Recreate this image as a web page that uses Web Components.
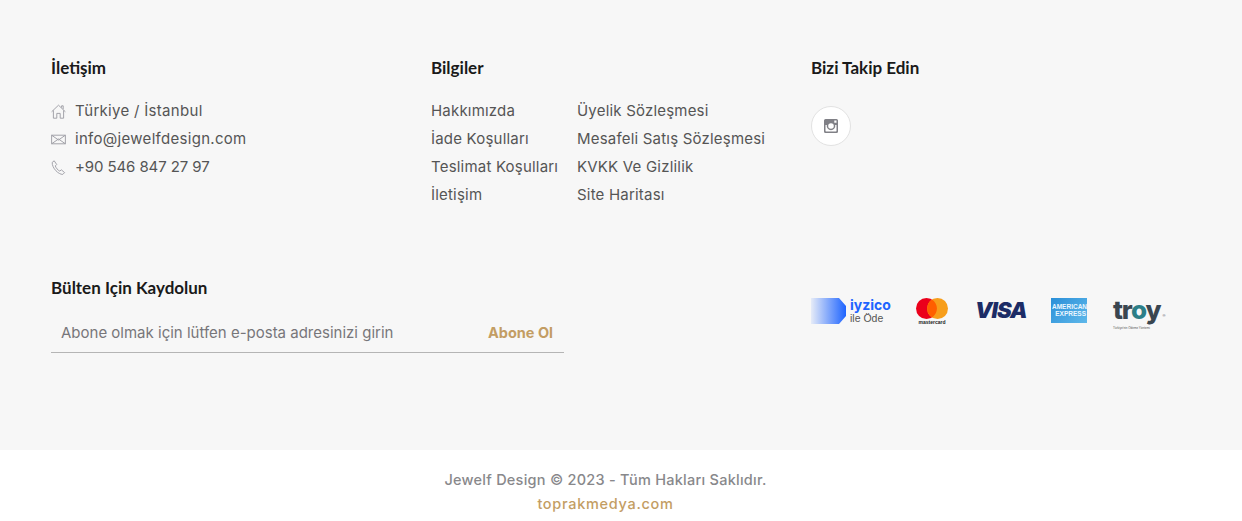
<!DOCTYPE html>
<html lang="tr">
<head>
<meta charset="utf-8">
<title>Jewelf Design</title>
<style>
    html, body { margin: 0; background: #fff; }
</style>
</head>
<body>
<site-footer>
    <footer-column slot="contact" title="İletişim">
        <contact-list></contact-list>
    </footer-column>
    <footer-column slot="info" title="Bilgiler">
        <link-list></link-list>
    </footer-column>
    <footer-column slot="social" title="Bizi Takip Edin">
        <social-button></social-button>
    </footer-column>
    <footer-column slot="news" title="Bülten Için Kaydolun">
        <news-form></news-form>
    </footer-column>
    <pay-logos slot="pay"></pay-logos>
</site-footer>
<copy-bar></copy-bar>

<script>
// Componentes del pie de página

const bodyFont = `"Inter", "Noto Sans", sans-serif`;
const headFont = `"Lato", "Inter", sans-serif`;

class SiteFooter extends HTMLElement {
    constructor() {
        super();
        this.shadow = this.attachShadow({mode: 'open'});
    }

    connectedCallback() {
        this.shadow.innerHTML = `
        <style>
            :host {
                display: block;
                background-color: #f7f7f7;
                height: 450px;
                box-sizing: border-box;
                padding: 58px 51px 0;
            }
            .grid {
                display: grid;
                grid-template-columns: 380px 380px 380px;
                grid-template-rows: 220px auto;
            }
            .pay { grid-column: 3; padding-top: 17px; }
            .news { grid-column: 1 / 3; }
        </style>
        <div class="grid">
            <div><slot name="contact"></slot></div>
            <div><slot name="info"></slot></div>
            <div><slot name="social"></slot></div>
            <div class="news"><slot name="news"></slot></div>
            <div class="pay"><slot name="pay"></slot></div>
        </div>
        `;
    }
}

class FooterColumn extends HTMLElement {
    constructor() {
        super();
        this.shadow = this.attachShadow({mode: 'open'});
    }

    connectedCallback() {
        this.shadow.innerHTML = `
        <style>
            :host { display: block; }
            h3 {
                margin: 0 0 19px;
                font: 700 17px/20px ${headFont};
                color: #1a1a1a;
            }
        </style>
        <h3>${this.getAttribute('title')}</h3>
        <slot></slot>
        `;
    }
}

class ContactList extends HTMLElement {
    constructor() {
        super();
        this.shadow = this.attachShadow({mode: 'open'});
    }

    connectedCallback() {
        this.shadow.innerHTML = `
        <style>
            :host {
                display: block;
                font: 400 15px/28px ${bodyFont};
                color: #555;
                letter-spacing: .3px;
            }
            div { display: flex; align-items: center; height: 28px; }
            .phone { letter-spacing: -.1px; }
            svg {
                width: 15px;
                height: 15px;
                margin-right: 9px;
                fill: none;
                stroke: #9a9aa2;
                stroke-width: .9;
            }
        </style>
        <div>
            <svg viewBox="0 0 15 15"><path d="M.6 7.800 7.500 1.200l6.900 6.600M2.400 6.400v7.800h3.400V9.400h3.400v4.800h3.400V6.400M10.600 3.600V1.800h1.600v3.300"/></svg>
            Türkiye / İstanbul
        </div>
        <div>
            <svg viewBox="0 0 15 15"><path d="M.6 3.200 7.500 8l6.900-4.800v8.600L7.500 7 .6 11.800zM.6 3.200h13.800M.6 11.800h13.800"/></svg>
            info@jewelfdesign.com
        </div>
        <div class="phone">
            <svg viewBox="0 0 15 15"><path d="M1.200 2.400 3.200.8l2.500 3.700-1.400 1.400c.6 2 2.500 4.300 4.500 5.200l1.500-1.300 3.300 2.800-1.800 1.800C7.800 14.700.9 8.200 1.200 2.400z"/></svg>
            +90 546 847 27 97
        </div>
        `;
    }
}

class LinkList extends HTMLElement {
    constructor() {
        super();
        this.shadow = this.attachShadow({mode: 'open'});
    }

    connectedCallback() {
        const links = [
            'Hakkımızda', 'Üyelik Sözleşmesi',
            'İade Koşulları', 'Mesafeli Satış Sözleşmesi',
            'Teslimat Koşulları', 'KVKK Ve Gizlilik',
            'İletişim', 'Site Haritası'
        ];
        this.shadow.innerHTML = `
        <style>
            :host {
                display: grid;
                grid-template-columns: 146px auto;
                font: 400 15px/28px ${bodyFont};
                color: #555;
                letter-spacing: .2px;
                white-space: nowrap;
            }
        </style>
        ${links.map((l) => `<div>${l}</div>`).join('')}
        `;
    }
}

class SocialButton extends HTMLElement {
    constructor() {
        super();
        this.shadow = this.attachShadow({mode: 'open'});
    }

    connectedCallback() {
        this.shadow.innerHTML = `
        <style>
            :host {
                display: flex;
                align-items: center;
                justify-content: center;
                width: 40px;
                height: 40px;
                margin-top: 28px;
                box-sizing: border-box;
                border: 1px solid #e2e2e2;
                border-radius: 50%;
                background: #fff;
            }
            svg { width: 14px; height: 14px; }
        </style>
        <svg viewBox="0 0 14 14">
            <path fill="#808086" fill-rule="evenodd" d="M1.500 0h11A1.500 1.500 0 0 1 14 1.500v11a1.500 1.500 0 0 1-1.500 1.500h-11A1.500 1.500 0 0 1 0 12.500v-11A1.500 1.500 0 0 1 1.500 0zM1.500 6v6c0 .3.2.5.5.5h10c.3 0 .5-.2.500-.5V6h-1.300a4.300 4.300 0 1 1-8.400 0zM7 4.200a2.800 2.800 0 1 0 0 5.600 2.800 2.800 0 0 0 0-5.600zM10.300 1.500v2.300h2.200V1.500z"/>
        </svg>
        `;
    }
}

class NewsForm extends HTMLElement {
    constructor() {
        super();
        this.shadow = this.attachShadow({mode: 'open'});
    }

    connectedCallback() {
        this.shadow.innerHTML = `
        <style>
            :host {
                display: flex;
                justify-content: space-between;
                align-items: center;
                width: 513px;
                height: 41px;
                margin-top: -5px;
                box-sizing: border-box;
                border-bottom: 1px solid #b5b5b5;
                padding: 0 11px 0 10px;
                font-family: ${bodyFont};
            }
            .hint { font-size: 15px; color: #77767a; }
            .send { font-size: 14.500px; font-weight: 700; color: #c39d63; }
        </style>
        <span class="hint">Abone olmak için lütfen e-posta adresinizi girin</span>
        <span class="send">Abone Ol</span>
        `;
    }
}

class PayLogos extends HTMLElement {
    constructor() {
        super();
        this.shadow = this.attachShadow({mode: 'open'});
    }

    connectedCallback() {
        this.shadow.innerHTML = `
        <style>
            :host {
                display: flex;
                align-items: center;
                height: 30px;
                font-family: "Liberation Sans", sans-serif;
            }
            .iyzico { display: flex; align-items: center; width: 105px; margin-top: 2px; }
            .iyzico svg { width: 35px; height: 26px; margin-right: 4px; }
            .iyzico b { display: block; font: 700 14px/14px "Inter", sans-serif; color: #1e64ff; }
            .iyzico span { display: block; font-size: 10.500px; line-height: 13px; color: #555; }
            .master { width: 59px; display: flex; flex-direction: column; align-items: flex-start; margin-top: 2px; }
            .master svg { width: 32px; height: 21px; }
            .master span { font: 700 5px/6px "Liberation Sans", sans-serif; color: #222; width: 32px; text-align: center; }
            .visa {
                width: 76px;
                font: italic 900 22px/26px "Inter", sans-serif;
                color: #1c2c66;
                letter-spacing: -1px;
            }
            .amex {
                width: 36px;
                height: 25px;
                box-sizing: border-box;
                padding: 0 1px;
                margin-right: 26px;
                background: linear-gradient(135deg, #2a8fd8, #5fb8ea);
                color: #eaf6ff;
                font: 700 6.500px/7px "Liberation Sans", sans-serif;
                display: flex;
                flex-direction: column;
                justify-content: center;
                white-space: nowrap;
                overflow: hidden;
            }
            .amex div:last-child { align-self: flex-end; }
            .troy {
                position: relative;
                font: 800 26px/24px "Inter", sans-serif;
                color: #3a4650;
                letter-spacing: -1.100px;
            }
            .troy i { font-style: normal; color: #2c7f88; }
            .troy sup {
                position: absolute;
                right: -5px;
                bottom: 4px;
                font: 400 4px/4px "Liberation Sans", sans-serif;
                letter-spacing: 0;
            }
            .troy small {
                position: absolute;
                left: 0;
                top: calc(100% + 4px);
                font: 400 3px/4px "Liberation Sans", sans-serif;
                letter-spacing: 0;
                white-space: nowrap;
                color: #555;
            }
        </style>
        <div class="iyzico">
            <svg viewBox="0 0 35 26">
                <defs>
                    <linearGradient id="iz">
                        <stop offset="0" stop-color="#1e64ff" stop-opacity=".08"/>
                        <stop offset="1" stop-color="#1e64ff"/>
                    </linearGradient>
                </defs>
                <path fill="url(#iz)" d="M0 0h28l7 8v10l-7 8H0z"/>
            </svg>
            <div><b>iyzico</b><span>ile Öde</span></div>
        </div>
        <div class="master">
            <svg viewBox="0 0 32 21">
                <circle cx="10.500" cy="10.500" r="10.500" fill="#eb001b"/>
                <circle cx="21.500" cy="10.500" r="10.500" fill="#f79e1b"/>
                <path fill="#ff5f00" d="M16 1.600a10.500 10.500 0 0 1 0 17.800 10.500 10.500 0 0 1 0-17.800z"/>
            </svg>
            <span>mastercard</span>
        </div>
        <div class="visa">VISA</div>
        <div class="amex"><div>AMERICAN</div><div>EXPRESS</div></div>
        <div class="troy">tr<i>o</i>y<sup>®</sup><small>Türkiye'nin Ödeme Yöntemi</small></div>
        `;
    }
}

class CopyBar extends HTMLElement {
    constructor() {
        super();
        this.shadow = this.attachShadow({mode: 'open'});
    }

    connectedCallback() {
        this.shadow.innerHTML = `
        <style>
            :host {
                display: block;
                padding: 18px 31px 0 0;
                height: 71px;
                box-sizing: border-box;
                text-align: center;
                font: 500 14.500px/24px ${bodyFont};
                color: #88888b;
                letter-spacing: .25px;
            }
            a { color: #c39d63; text-decoration: none; display: block; letter-spacing: .7px; }
        </style>
        <div>Jewelf Design © 2023 - Tüm Hakları Saklıdır.</div>
        <a href="#">toprakmedya.com</a>
        `;
    }
}

customElements.define('site-footer', SiteFooter);
customElements.define('footer-column', FooterColumn);
customElements.define('contact-list', ContactList);
customElements.define('link-list', LinkList);
customElements.define('social-button', SocialButton);
customElements.define('news-form', NewsForm);
customElements.define('pay-logos', PayLogos);
customElements.define('copy-bar', CopyBar);
</script>
</body>
</html>
